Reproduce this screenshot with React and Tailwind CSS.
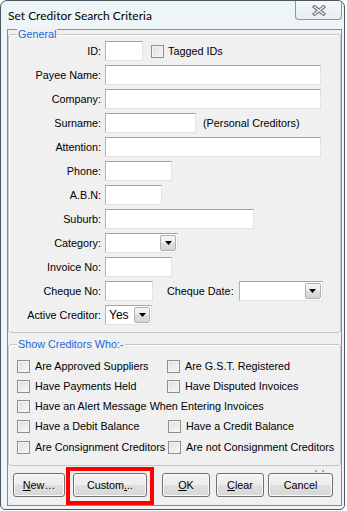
import React from "react";

const tb =
  "h-[20px] bg-white border border-t-[#a3a3a3] border-l-[#b3b3b3] border-r-[#e3e3e3] border-b-[#e3e3e3]";

function TextBox({ w }) {
  return <div className={`${tb} shrink-0`} style={{ width: w }} />;
}

function Arrow() {
  return (
    <svg width="7" height="4" viewBox="0 0 7 4">
      <path d="M0 0 L7 0 L3.5 4 Z" fill="#000" />
    </svg>
  );
}

function Combo({ w, value }) {
  return (
    <div className={`${tb} shrink-0 flex items-center pr-px`} style={{ width: w }}>
      <span className="pl-[3px] flex-1 text-[12px] leading-[14px]">{value}</span>
      <div className="w-[16px] h-[16px] border border-[#b0b0b0] rounded-[2px] bg-[linear-gradient(to_bottom,#f4f4f4_0%,#ebebeb_50%,#dedede_51%,#d4d4d4_100%)] flex items-center justify-center">
        <Arrow />
      </div>
    </div>
  );
}

function Check() {
  return (
    <div className="w-[13px] h-[13px] shrink-0 border border-[#8e8f8f] bg-[linear-gradient(135deg,#dedede_0%,#f8f8f8_100%)] shadow-[inset_0_0_0_1px_#f4f4f4]" />
  );
}

function Row({ label, children }) {
  return (
    <div className="flex items-center h-[20px]">
      <div className="w-[92px] text-right leading-[13px] shrink-0">{label}</div>
      <div className="ml-[4px] flex items-center">{children}</div>
    </div>
  );
}

function CB({ label, w }) {
  return (
    <div className="flex items-center shrink-0" style={w ? { width: w } : undefined}>
      <Check />
      <span className="ml-[5px] leading-[13px] whitespace-nowrap">{label}</span>
    </div>
  );
}

const btn =
  "h-[24px] shrink-0 border border-[#707070] rounded-[3px] bg-[linear-gradient(to_bottom,#f3f3f3_0%,#ececec_50%,#dfdfdf_51%,#d7d7d7_100%)] shadow-[inset_0_0_0_1px_#fafafa] flex items-center justify-center leading-[13px] text-black";

export default function App() {
  return (
    <div className="w-[347px] h-[511px] bg-white font-['Liberation_Sans',Arial,sans-serif] text-[10.8px] text-black">
      <div className="w-[345px] h-[510px] border border-[#4c565e] rounded-t-[7px] rounded-b-[5px] bg-[#edf5f7] flex flex-col overflow-hidden">
        <div className="h-[28px] flex items-start shrink-0">
          <div className="pl-[7px] pt-[7px] text-[12px] leading-[15px] font-['Lato',sans-serif] text-black">
            Set Creditor Search Criteria
          </div>
          <div className="ml-auto mr-[2px] w-[47px] h-[19px] border border-t-0 border-[#8a969f] rounded-b-[4px] bg-[linear-gradient(to_bottom,#f4f8fa,#e6eef1)] flex items-center justify-center">
            <svg width="14" height="11" viewBox="0 0 14 11">
              <path d="M2.5 2 L11.5 9 M11.5 2 L2.5 9" stroke="#7a7a7a" strokeWidth="3.6" strokeLinecap="square" />
              <path d="M2.5 2 L11.5 9 M11.5 2 L2.5 9" stroke="#f2f2f2" strokeWidth="1.4" strokeLinecap="square" />
            </svg>
          </div>
        </div>

        <div className="relative ml-[6px] w-[335px] h-[477px] border border-[#8a8a8a] bg-[#f0f0f0] flex flex-col">
          {/* General */}
          <div className="relative mt-[4px] h-[299px] border border-[#c3c7cb] rounded-[3px] shadow-[inset_1px_1px_0_#ffffff] flex flex-col pt-[6px] gap-[4px]">
            <span className="absolute -top-[7px] left-[8px] px-[1px] bg-[#f0f0f0] text-[#1c68d8] leading-[13px]">
              General
            </span>
            <Row label="ID:">
              <TextBox w={38} />
              <div className="ml-[8px]"><Check /></div>
              <span className="ml-[4px] leading-[13px]">Tagged IDs</span>
            </Row>
            <Row label="Payee Name:"><TextBox w={216} /></Row>
            <Row label="Company:"><TextBox w={216} /></Row>
            <Row label="Surname:">
              <TextBox w={91} />
              <span className="ml-[7px] leading-[13px]">(Personal Creditors)</span>
            </Row>
            <Row label="Attention:"><TextBox w={216} /></Row>
            <Row label="Phone:"><TextBox w={67} /></Row>
            <Row label="A.B.N:"><TextBox w={57} /></Row>
            <Row label="Suburb:"><TextBox w={149} /></Row>
            <Row label="Category:"><Combo w={73} /></Row>
            <Row label="Invoice No:"><TextBox w={67} /></Row>
            <Row label="Cheque No:">
              <TextBox w={48} />
              <span className="ml-[14px] leading-[13px]">Cheque Date:</span>
              <div className="ml-[5px]"><Combo w={84} /></div>
            </Row>
            <Row label="Active Creditor:"><Combo w={47} value="Yes" /></Row>
          </div>

          {/* Show creditors */}
          <div className="relative mt-[11px] h-[122px] border border-[#c3c7cb] rounded-[3px] shadow-[inset_1px_1px_0_#ffffff] flex flex-col pt-[11px] pl-[8px]">
            <span className="absolute -top-[7px] left-[8px] px-[1px] bg-[#f0f0f0] text-[#1c68d8] leading-[13px]">
              Show Creditors Who:-
            </span>
            <div className="flex items-center h-[20px]">
              <CB label="Are Approved Suppliers" w={150} />
              <CB label="Are G.S.T. Registered" />
            </div>
            <div className="flex items-center h-[20px]">
              <CB label="Have Payments Held" w={150} />
              <CB label="Have Disputed Invoices" />
            </div>
            <div className="flex items-center h-[20px]">
              <CB label="Have an Alert Message When Entering Invoices" />
            </div>
            <div className="flex items-center h-[20px]">
              <CB label="Have a Debit Balance" w={151} />
              <CB label="Have a Credit Balance" />
            </div>
            <div className="flex items-center h-[21px] pt-px">
              <CB label="Are Consignment Creditors" w={151} />
              <CB label="Are not Consignment Creditors" />
            </div>
          </div>

          <span className="absolute left-[307px] top-[440px] w-[2px] h-[2px] bg-[#a8a8a8]" />
          <span className="absolute left-[314px] top-[440px] w-[2px] h-[2px] bg-[#a8a8a8]" />

          {/* Buttons */}
          <div className="mt-[1px] h-[38px] flex items-start">
            <div className={`${btn} ml-[5px] mt-[6px] w-[52px]`}>
              <span><span className="underline">N</span>ew…</span>
            </div>
            <div className="ml-[1px] border-[4px] border-[#ff0000] pt-[2px] pb-[4px] px-[3px]">
              <div className={`${btn} w-[74px]`}>
                <span>Custom<span className="underline">.</span>..</span>
              </div>
            </div>
            <div className={`${btn} ml-[8px] mt-[6px] w-[48px]`}>
              <span><span className="underline">O</span>K</span>
            </div>
            <div className={`${btn} ml-[6px] mt-[6px] w-[48px]`}>
              <span><span className="underline">C</span>lear</span>
            </div>
            <div className={`${btn} ml-[4px] mt-[6px] w-[65px]`}>
              <span>Cancel</span>
            </div>
          </div>
        </div>
      </div>
    </div>
  );
}
